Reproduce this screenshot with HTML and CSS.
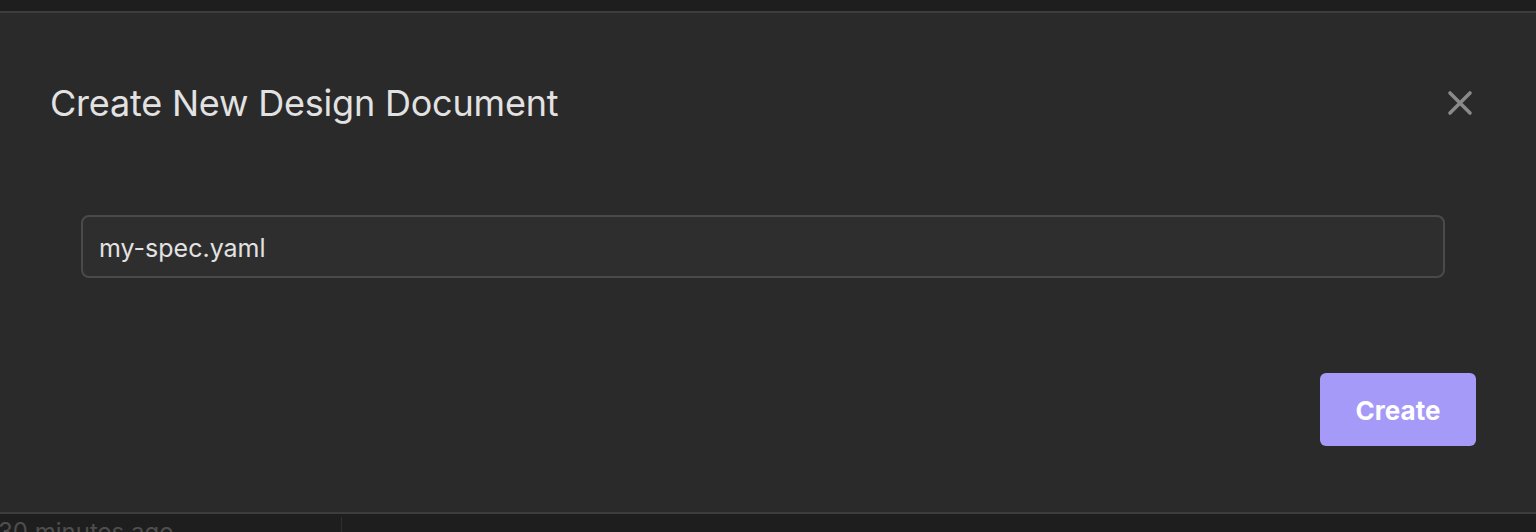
FILE: index.html
```html
<!DOCTYPE html>
<html lang="en">
<head>
<meta charset="utf-8">
<title>Create New Design Document</title>
<link rel="stylesheet" href="styles.css">
</head>
<body>
<div class="topbar"></div>
<div class="modal">
  <div class="modal-header">
    <h1 class="modal-title">Create New Design Document</h1>
    <button class="close-btn" aria-label="Close">
      <svg width="26" height="26" viewBox="0 0 26 26"><path d="M3 3 L23 23 M23 3 L3 23" stroke="#8a8a8a" stroke-width="3.6" stroke-linecap="round" fill="none"/></svg>
    </button>
  </div>
  <div class="modal-body">
    <input class="name-input" type="text" value="my-spec.yaml">
  </div>
  <div class="modal-footer">
    <button class="create-btn">Create</button>
  </div>
</div>
<div class="bottom">
  <div class="bottom-cell">30 minutes ago</div>
  <div class="bottom-rest"></div>
</div>
</body>
</html>
```

FILE: styles.css
```css
* { box-sizing: border-box; }
html, body {
  margin: 0;
  padding: 0;
  height: 532px;
  overflow: hidden;
  background: #1e1e1e;
  font-family: Inter, "Noto Sans", sans-serif;
}
.topbar {
  height: 11px;
  background: #1e1e1e;
}
.modal {
  height: 503px;
  background: #2a2a2a;
  border-top: 2px solid #3d3d3d;
  border-bottom: 2px solid #3d3d3d;
  display: flex;
  flex-direction: column;
}
.modal-header {
  display: flex;
  align-items: center;
  justify-content: space-between;
  padding: 68px 63px 0 50px;
}
.modal-title {
  margin: 0;
  font-size: 36px;
  line-height: 44px;
  font-weight: 400;
  color: #e2e2e2;
  letter-spacing: -0.2px;
}
.close-btn {
  background: none;
  border: none;
  padding: 0;
  width: 26px;
  height: 26px;
  display: flex;
}
.modal-body {
  padding: 90px 91px 0 81px;
}
.name-input {
  width: 100%;
  height: 63px;
  background: #2e2e2e;
  border: 2px solid #4a4a4a;
  border-radius: 8px;
  padding: 2px 16px 0;
  font-family: Inter, "Noto Sans", sans-serif;
  font-size: 25px;
  color: #e2e2e2;
  outline: none;
}
.modal-footer {
  display: flex;
  justify-content: flex-end;
  padding: 95px 60px 0 0;
}
.create-btn {
  width: 156px;
  height: 73px;
  background: #a59af7;
  border: none;
  border-radius: 6px;
  color: #ffffff;
  font-family: Inter, "Noto Sans", sans-serif;
  font-size: 26px;
  font-weight: 700;
  padding-top: 2px;
}
.bottom {
  display: flex;
  height: 20px;
  overflow: hidden;
}
.bottom-cell {
  width: 344px;
  border-right: 1px solid #2f2f2f;
  font-size: 24px;
  line-height: 30px;
  margin-top: 3px;
  color: #4e4e4e;
  margin-left: -2px;
  white-space: nowrap;
}
.bottom-rest { flex: 1; }
```
